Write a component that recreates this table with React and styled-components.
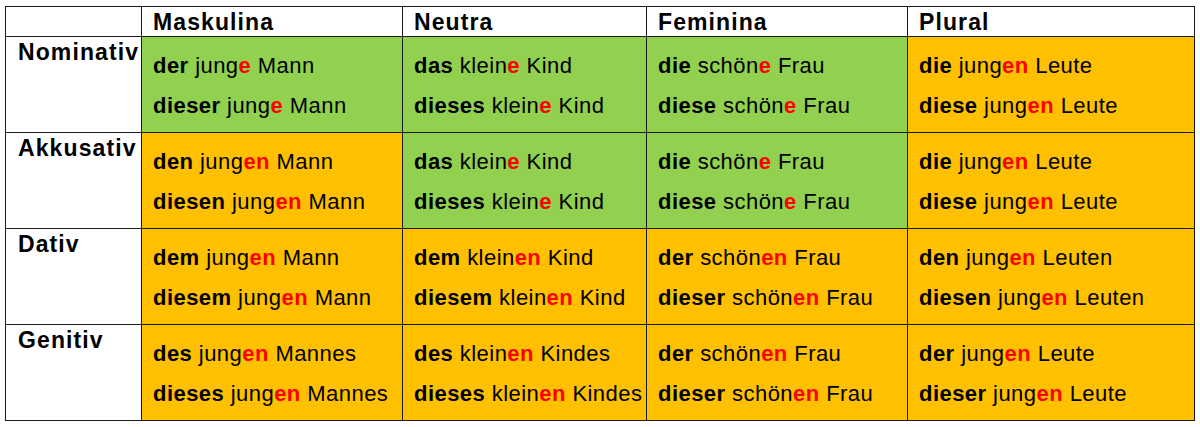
import React from 'react';
import styled, { createGlobalStyle } from 'styled-components';

const GlobalStyle = createGlobalStyle`
    body {
        margin: 0;
        background: #fff;
        font-family: "Liberation Sans", Arial, sans-serif;
    }
`;

const GREEN = '#92d050';
const ORANGE = '#ffc000';

const Table = styled.div`
    display: grid;
    grid-template-columns: 135px 260px 243px 260px 286px;
    grid-template-rows: 29px repeat(4, 95px);
    gap: 1px;
    padding: 1px;
    background: #1a1a1a;
    margin: 6px 0 0 5px;
    width: fit-content;
`;

const HeadCell = styled.div`
    background: #fff;
    display: flex;
    align-items: center;
    padding: 1px 0 0 11px;
    font-size: 23px;
    font-weight: bold;
    letter-spacing: 1.1px;
    color: #000;
`;

const LabelCell = styled.div`
    background: #fff;
    padding: 2px 0 0 12px;
    font-size: 23px;
    font-weight: bold;
    letter-spacing: 1.1px;
    line-height: 26px;
    overflow: hidden;
    white-space: nowrap;
`;

const FormCell = styled.div`
    background: ${props => props.bg};
    display: flex;
    flex-direction: column;
    justify-content: center;
    padding: 2px 0 0 11px;
    overflow: hidden;
`;

const Line = styled.div`
    font-size: 22px;
    letter-spacing: 0.45px;
    line-height: 40px;
    white-space: nowrap;
    color: #000;
`;

const Article = styled.b``;

const Ending = styled.b`
    color: #ff0000;
`;

const headers = ['Maskulina', 'Neutra', 'Feminina', 'Plural'];

// each form: [article, stem, ending, noun]
const rows = [
    {
        label: 'Nominativ',
        cells: [
            { bg: GREEN, lines: [['der', 'jung', 'e', 'Mann'], ['dieser', 'jung', 'e', 'Mann']] },
            { bg: GREEN, lines: [['das', 'klein', 'e', 'Kind'], ['dieses', 'klein', 'e', 'Kind']] },
            { bg: GREEN, lines: [['die', 'schön', 'e', 'Frau'], ['diese', 'schön', 'e', 'Frau']] },
            { bg: ORANGE, lines: [['die', 'jung', 'en', 'Leute'], ['diese', 'jung', 'en', 'Leute']] },
        ],
    },
    {
        label: 'Akkusativ',
        cells: [
            { bg: ORANGE, lines: [['den', 'jung', 'en', 'Mann'], ['diesen', 'jung', 'en', 'Mann']] },
            { bg: GREEN, lines: [['das', 'klein', 'e', 'Kind'], ['dieses', 'klein', 'e', 'Kind']] },
            { bg: GREEN, lines: [['die', 'schön', 'e', 'Frau'], ['diese', 'schön', 'e', 'Frau']] },
            { bg: ORANGE, lines: [['die', 'jung', 'en', 'Leute'], ['diese', 'jung', 'en', 'Leute']] },
        ],
    },
    {
        label: 'Dativ',
        cells: [
            { bg: ORANGE, lines: [['dem', 'jung', 'en', 'Mann'], ['diesem', 'jung', 'en', 'Mann']] },
            { bg: ORANGE, lines: [['dem', 'klein', 'en', 'Kind'], ['diesem', 'klein', 'en', 'Kind']] },
            { bg: ORANGE, lines: [['der', 'schön', 'en', 'Frau'], ['dieser', 'schön', 'en', 'Frau']] },
            { bg: ORANGE, lines: [['den', 'jung', 'en', 'Leuten'], ['diesen', 'jung', 'en', 'Leuten']] },
        ],
    },
    {
        label: 'Genitiv',
        cells: [
            { bg: ORANGE, lines: [['des', 'jung', 'en', 'Mannes'], ['dieses', 'jung', 'en', 'Mannes']] },
            { bg: ORANGE, lines: [['des', 'klein', 'en', 'Kindes'], ['dieses', 'klein', 'en', 'Kindes']] },
            { bg: ORANGE, lines: [['der', 'schön', 'en', 'Frau'], ['dieser', 'schön', 'en', 'Frau']] },
            { bg: ORANGE, lines: [['der', 'jung', 'en', 'Leute'], ['dieser', 'jung', 'en', 'Leute']] },
        ],
    },
];

function Form({ parts }) {
    const [article, stem, ending, noun] = parts;
    return (
        <Line>
            <Article>{article}</Article> {stem}<Ending>{ending}</Ending> {noun}
        </Line>
    );
}

export default function App() {
    return (
        <>
            <GlobalStyle />
            <Table>
                <HeadCell />
                {headers.map(h => <HeadCell key={h}>{h}</HeadCell>)}
                {rows.map(row => (
                    <React.Fragment key={row.label}>
                        <LabelCell>{row.label}</LabelCell>
                        {row.cells.map((cell, i) => (
                            <FormCell key={i} bg={cell.bg}>
                                {cell.lines.map((parts, j) => <Form key={j} parts={parts} />)}
                            </FormCell>
                        ))}
                    </React.Fragment>
                ))}
            </Table>
        </>
    );
}
